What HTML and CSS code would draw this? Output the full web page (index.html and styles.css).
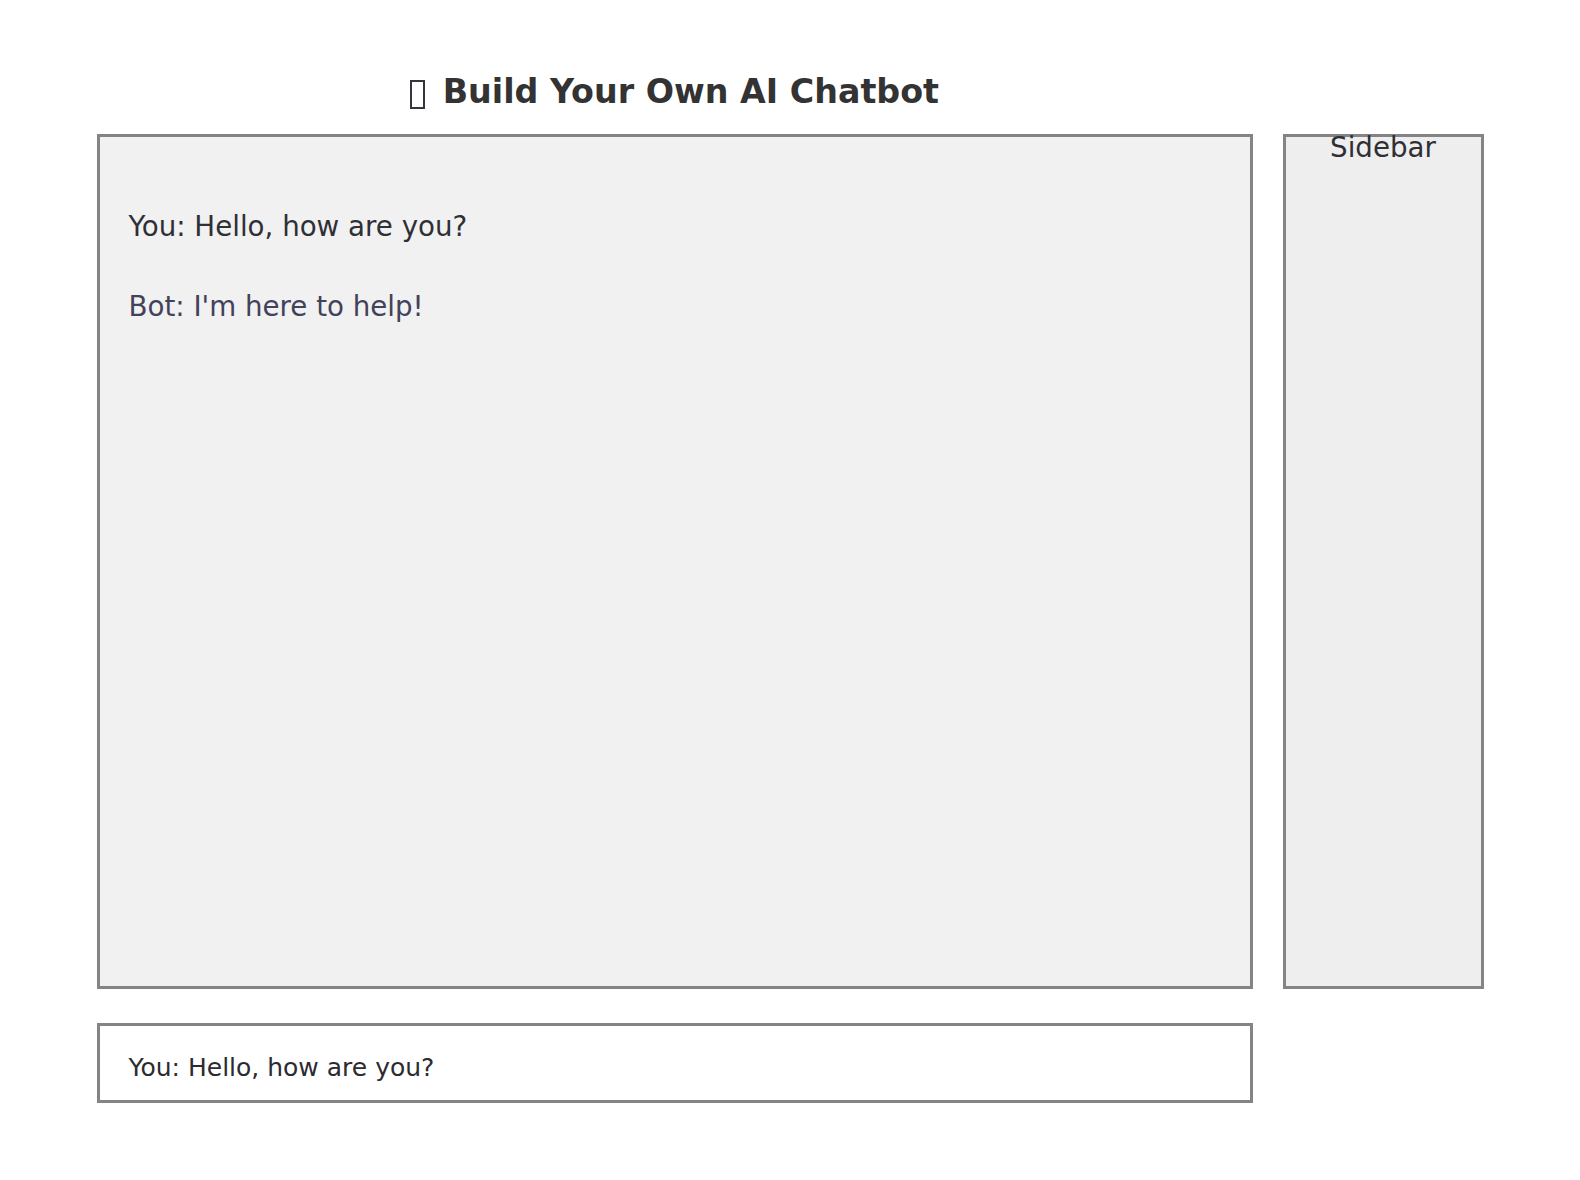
FILE: index.html
```html
<!DOCTYPE html>
<html lang="en">
<head>
<meta charset="utf-8">
<title>Build Your Own AI Chatbot</title>
<link rel="stylesheet" href="styles.css">
</head>
<body>
<div class="page">
  <h1 class="title"><span class="tofu" aria-hidden="true"></span> Build Your Own AI Chatbot</h1>
  <div class="chat">
    <div class="msg msg-user">You: Hello, how are you?</div>
    <div class="msg msg-bot">Bot: I'm here to help!</div>
  </div>
  <aside class="sidebar">Sidebar</aside>
  <div class="input">You: Hello, how are you?</div>
</div>
</body>
</html>
```

FILE: styles.css
```css
html, body {
  margin: 0;
  padding: 0;
  background: #ffffff;
}

body {
  font-family: "DejaVu Sans", "Noto Sans", sans-serif;
  color: #333333;
}

.page {
  width: 1387px;
  margin: 0 auto;
  padding-top: 72px;
  display: grid;
  grid-template-columns: 1156px 201px;
  column-gap: 30px;
}

.title {
  grid-column: 1;
  grid-row: 1;
  margin: 0 0 23px;
  font-size: 33.3px;
  font-weight: bold;
  text-align: center;
  color: #333333;
}

.tofu {
  display: inline-block;
  box-sizing: border-box;
  width: 15px;
  height: 29px;
  border: 2px solid #35353d;
  margin-right: 6px;
  vertical-align: -6px;
}

.chat {
  grid-column: 1;
  grid-row: 2;
  box-sizing: border-box;
  height: 855px;
  border: 3px solid #848484;
  background: #f1f1f1;
  padding: 74px 29px 20px;
  display: flex;
  flex-direction: column;
  gap: 49px;
}

.msg {
  font-size: 27.7px;
  line-height: 31px;
}

.msg-user {
  color: #2f2f36;
}

.msg-bot {
  color: #42425a;
}

.sidebar {
  grid-column: 2;
  grid-row: 2;
  box-sizing: border-box;
  height: 855px;
  border: 3px solid #848484;
  background: #eeeeee;
  text-align: center;
  font-size: 27.7px;
  line-height: 22px;
  color: #2f2f36;
}

.input {
  grid-column: 1;
  grid-row: 3;
  box-sizing: border-box;
  height: 80px;
  margin-top: 34px;
  border: 3px solid #848484;
  background: #ffffff;
  padding: 27px 29px 0;
  font-size: 25px;
  color: #2b2b30;
}
```
